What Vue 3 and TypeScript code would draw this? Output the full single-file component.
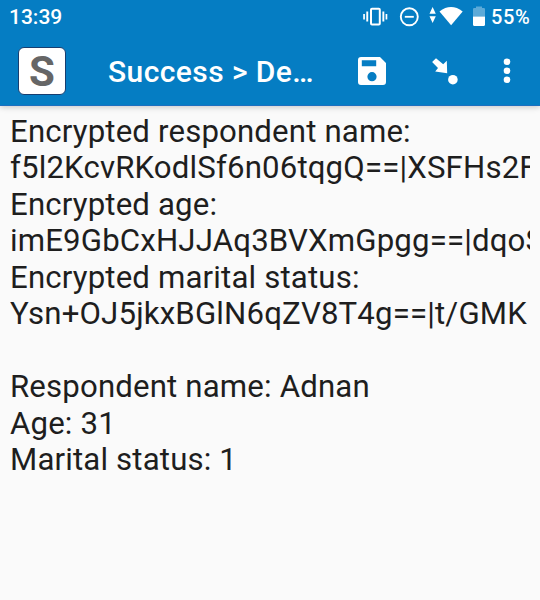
<script setup lang="ts">
interface Line {
  id: number
  text: string
}

const lines: Line[] = [
  'Encrypted respondent name:',
  'f5l2KcvRKodlSf6n06tqgQ==|XSFHs2F',
  'Encrypted age:',
  'imE9GbCxHJJAq3BVXmGpgg==|dqoS',
  'Encrypted marital status:',
  'Ysn+OJ5jkxBGlN6qZV8T4g==|t/GMK',
  '',
  'Respondent name: Adnan',
  'Age: 31',
  'Marital status: 1',
].map((text, id) => ({ id, text }))
</script>

<template>
  <main class="screen">
    <header class="top">
      <div class="status">
        <span class="clock">13:39</span>
        <svg class="status-icons" width="125" height="36" viewBox="0 0 125 36" fill="#fff">
          <path d="M.2 14h1.700v5.500H.2zM3.300 11.500h1.900v10H3.300zM19.400 11.500h1.900v10h-1.900zM22.600 14h1.700v5.500h-1.700z" />
          <rect x="8" y="8.800" width="8.800" height="15.700" rx="1" fill="none" stroke="#fff" stroke-width="2" />
          <circle cx="46.300" cy="16.800" r="8.500" fill="none" stroke="#fff" stroke-width="1.900" />
          <path d="M41.800 15.900h9v1.800h-9z" />
          <path d="M66.500 13.800 69.600 7l3.200 6.800zM66.500 16.300h6.300l-3.200 6.700z" />
          <path d="M76.500 11.400Q88 2.700 99.700 11.400L88.100 25.200z" />
          <path d="M110 9.200q0-1.100 1.100-1.100h1.900V6.400h6v1.700h1.900q1.100 0 1.100 1.100v7.400h-12z" opacity=".35" />
          <path d="M110 16.600h12v8.200q0 1.100-1.100 1.100h-9.800q-1.100 0-1.100-1.100z" />
        </svg>
        <span class="battery">55%</span>
      </div>
      <div class="toolbar">
        <div class="logo">S</div>
        <h1 class="title">Success &gt; De…</h1>
        <div class="actions">
          <svg width="28" height="28" viewBox="0 0 28 28" fill="#fff" fill-rule="evenodd">
            <path d="M3 0h19l6 6v19q0 3-3 3H3q-3 0-3-3V3Q0 0 3 0zM3.800 3.200v6.100h14.400V3.200zM14 15.100a4.600 4.600 0 1 0 0 9.200a4.600 4.600 0 0 0 0-9.200z" />
          </svg>
          <svg width="28" height="28" viewBox="0 0 28 28" fill="#fff">
            <path d="M4 1.200.1 5.100l5.900 6-2.800 3.500 12 1.600-.4-12.500-3.600 3.500z" />
            <circle cx="20.900" cy="22.700" r="4.800" />
          </svg>
          <svg class="more" width="8" height="28" viewBox="0 0 8 28" fill="#fff">
            <circle cx="4" cy="4.700" r="3.300" />
            <circle cx="4" cy="13.700" r="3.300" />
            <circle cx="4" cy="22.700" r="3.300" />
          </svg>
        </div>
      </div>
    </header>
    <section class="output">
      <p v-for="line in lines" :key="line.id" class="line">{{ line.text }}</p>
    </section>
  </main>
</template>

<style>
body {
  margin: 0;
  background: #fafafa;
}
</style>

<style scoped>
.screen {
  width: 540px;
  height: 600px;
  overflow: hidden;
  background: #fafafa;
  font-family: Roboto, sans-serif;
}
.top {
  box-sizing: border-box;
  height: 106px;
  background: #057dc3;
  border-bottom: 1px solid #1d6fc0;
  box-shadow: 0 1px 6px rgba(0, 0, 0, 0.22);
  color: #fff;
}
.status {
  display: flex;
  height: 36px;
  padding-left: 9px;
  line-height: 35px;
  font-size: 21px;
  font-weight: 500;
}
.clock {
  width: 354px;
}
.battery {
  margin-left: 3px;
  font-size: 20px;
  letter-spacing: 0.6px;
}
.toolbar {
  display: flex;
  align-items: center;
  height: 69px;
  padding-left: 18px;
}
.logo {
  box-sizing: border-box;
  width: 48px;
  height: 48px;
  border: 1px solid #173e70;
  border-radius: 6px;
  background: #fff;
  color: #666;
  font-size: 42px;
  font-weight: 700;
  line-height: 47px;
  text-align: center;
}
.title {
  width: 250px;
  margin: 2px 0 0 42px;
  font-size: 30px;
  font-weight: 500;
  line-height: 40px;
  letter-spacing: 0.42px;
  white-space: nowrap;
}
.actions {
  display: flex;
  gap: 46px;
}
.more {
  margin-left: -3px;
}
.output {
  margin: 7.5px 10px 0;
  overflow: hidden;
}
.line {
  height: 36.5px;
  margin: 0;
  color: #1e1e1e;
  font-size: 31.2px;
  font-weight: 400;
  line-height: 36.5px;
  letter-spacing: 0.155px;
  white-space: nowrap;
}
</style>
